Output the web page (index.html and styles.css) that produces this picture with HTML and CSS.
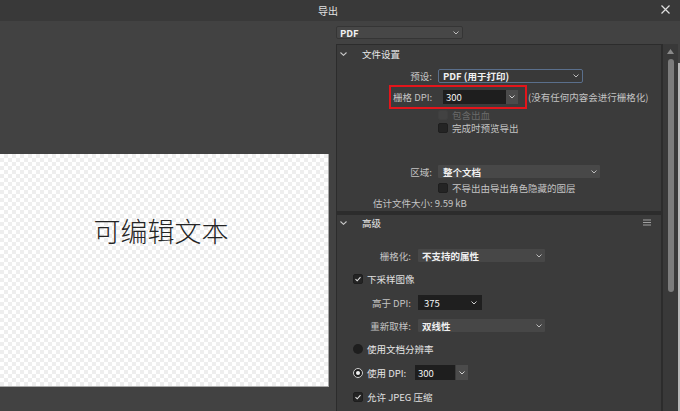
FILE: index.html
```html
<!DOCTYPE html>
<html lang="zh-CN">
<head>
<meta charset="utf-8">
<title>导出</title>
<link rel="stylesheet" href="styles.css">
</head>
<body>
<div class="window">
  <header class="titlebar">
    <div class="title">导出</div>
    <div class="close">
      <svg width="9" height="9" viewBox="0 0 9 9"><path d="M0.5 0.5L8.5 8.5M8.5 0.5L0.5 8.5" stroke="#e0e0e0" stroke-width="1.2" fill="none"/></svg>
    </div>
  </header>
  <div class="main">
    <div class="preview">
      <div class="canvas"><p class="doc-text">可编辑文本</p></div>
    </div>
    <div class="side">
      <div class="side-content">
        <div class="select select-format"><span class="sel-text">PDF</span><svg class="chev" width="6" height="4" viewBox="0 0 6 4"><path d="M0.5 0.5L3 3L5.5 0.5" fill="none" stroke="#bdbdbd" stroke-width="1"/></svg></div>
        <div class="panel">
          <section class="section s1">
            <div class="sec-head">
              <svg class="head-chev" width="7" height="4" viewBox="0 0 7 4"><path d="M0.5 0.5L3.5 3.3L6.5 0.5" fill="none" stroke="#c8c8c8" stroke-width="1.1"/></svg>
              <span class="sec-title">文件设置</span>
            </div>
            <div class="row r-preset">
              <span class="label">预设:</span>
              <div class="select select-preset"><span class="sel-text">PDF (用于打印)</span><svg class="chev" width="6" height="4" viewBox="0 0 6 4"><path d="M0.5 0.5L3 3L5.5 0.5" fill="none" stroke="#bdbdbd" stroke-width="1"/></svg></div>
            </div>
            <div class="row r-dpi">
              <div class="highlight">
                <span class="label-inline">栅格 DPI:</span>
                <div class="spin spin-raster">
                  <span class="spin-value">300</span>
                  <span class="spin-btn"><svg width="6" height="4" viewBox="0 0 6 4"><path d="M0.5 0.5L3 3L5.5 0.5" fill="none" stroke="#d0d0d0" stroke-width="1"/></svg></span>
                </div>
              </div>
              <span class="hint">(没有任何内容会进行栅格化)</span>
            </div>
            <div class="row check-row s1-check disabled r-bleed"><span class="checkbox"></span><span>包含出血</span></div>
            <div class="row check-row s1-check r-preview"><span class="checkbox"></span><span>完成时预览导出</span></div>
            <div class="row r-area">
              <span class="label">区域:</span>
              <div class="select select-area"><span class="sel-text">整个文档</span><svg class="chev" width="6" height="4" viewBox="0 0 6 4"><path d="M0.5 0.5L3 3L5.5 0.5" fill="none" stroke="#bdbdbd" stroke-width="1"/></svg></div>
            </div>
            <div class="row check-row s1-check r-hidden"><span class="checkbox"></span><span>不导出由导出角色隐藏的图层</span></div>
            <div class="row r-size">估计文件大小: 9.59 kB</div>
          </section>
          <section class="section s2">
            <div class="sec-head">
              <svg class="head-chev" width="7" height="4" viewBox="0 0 7 4"><path d="M0.5 0.5L3.5 3.3L6.5 0.5" fill="none" stroke="#c8c8c8" stroke-width="1.1"/></svg>
              <span class="sec-title">高级</span>
              <svg class="menu-icon" width="8" height="7" viewBox="0 0 8 7"><path d="M0 1H8M0 3.5H8M0 6H8" stroke="#a0a0a0" stroke-width="1.2"/></svg>
            </div>
            <div class="row r-rasterize">
              <span class="label label2">栅格化:</span>
              <div class="select select-s2"><span class="sel-text">不支持的属性</span><svg class="chev" width="6" height="4" viewBox="0 0 6 4"><path d="M0.5 0.5L3 3L5.5 0.5" fill="none" stroke="#bdbdbd" stroke-width="1"/></svg></div>
            </div>
            <div class="row check-row s2-check r-down"><span class="checkbox checked"><svg width="8" height="8" viewBox="0 0 8 8"><path d="M1.5 4.2L3.2 5.8L6.5 2.2" fill="none" stroke="#e4e4e4" stroke-width="1.1"/></svg></span><span>下采样图像</span></div>
            <div class="row r-above">
              <span class="label label2">高于 DPI:</span>
              <div class="spin-dark"><span class="spin-value">375</span><svg width="6" height="4" viewBox="0 0 6 4"><path d="M0.5 0.5L3 3L5.5 0.5" fill="none" stroke="#d0d0d0" stroke-width="1"/></svg></div>
            </div>
            <div class="row r-resample">
              <span class="label label2">重新取样:</span>
              <div class="select select-s2"><span class="sel-text">双线性</span><svg class="chev" width="6" height="4" viewBox="0 0 6 4"><path d="M0.5 0.5L3 3L5.5 0.5" fill="none" stroke="#bdbdbd" stroke-width="1"/></svg></div>
            </div>
            <div class="row check-row s2-check r-docres"><span class="radio"></span><span class="val">使用文档分辨率</span></div>
            <div class="row check-row s2-check r-usedpi">
              <span class="radio on"></span><span class="val usedpi-text">使用 DPI:</span>
              <div class="spin spin-use">
                <span class="spin-value">300</span>
                <span class="spin-btn"><svg width="6" height="4" viewBox="0 0 6 4"><path d="M0.5 0.5L3 3L5.5 0.5" fill="none" stroke="#d0d0d0" stroke-width="1"/></svg></span>
              </div>
            </div>
            <div class="row check-row s2-check r-jpeg"><span class="checkbox checked"><svg width="8" height="8" viewBox="0 0 8 8"><path d="M1.5 4.2L3.2 5.8L6.5 2.2" fill="none" stroke="#e4e4e4" stroke-width="1.1"/></svg></span><span>允许 JPEG 压缩</span></div>
          </section>
        </div>
      </div>
      <div class="scrollbar">
        <svg class="scroll-up" width="7" height="5" viewBox="0 0 7 5"><path d="M0 5L3.5 0L7 5Z" fill="#8a8a8a"/></svg>
        <div class="thumb"></div>
      </div>
      <div class="edge"></div>
    </div>
  </div>
</div>
</body>
</html>
```
FILE: styles.css
```css
* { box-sizing: border-box; margin: 0; padding: 0; }
html, body { width: 680px; height: 411px; overflow: hidden; background: #424242; }
body {
  font-family: "Noto Sans CJK SC", "Noto Sans", sans-serif;
  font-size: 9.5px;
  line-height: 12px;
  color: #c4c4c4;
}
.window { width: 680px; height: 411px; display: flex; flex-direction: column; }

.titlebar { height: 21px; flex: none; background: #393939; display: flex; align-items: center; }
.title { flex: 1; text-align: center; color: #e2e2e2; font-size: 10px; line-height: 20px; }
.close { width: 24px; height: 20px; display: flex; align-items: center; justify-content: center; padding-right: 5px; padding-bottom: 3px; }

.main { flex: 1; display: flex; min-height: 0; }

.preview { width: 330px; flex: none; padding-top: 133px; }
.canvas {
  width: 329px; height: 233px;
  border-right: 1px solid #a8a8a8; border-bottom: 1px solid #a8a8a8;
  background: repeating-conic-gradient(#eeeeee 0 25%, #ffffff 0 50%) 0 0 / 8px 8px;
  padding-top: 63px; padding-right: 6px;
}
.doc-text { font-size: 27px; line-height: 27px; text-align: center; color: #242424; font-weight: 300; }

.side { flex: 1; display: flex; min-width: 0; }
.side-content { width: 333px; flex: none; padding: 5px 0 0 6px; display: flex; flex-direction: column; }

.select { display: flex; align-items: center; justify-content: space-between; height: 13px; color: #f0f0f0; }
.sel-text { font-weight: 600; line-height: 12px; white-space: nowrap; }
.select-format { width: 127px; background: #474747; border: 1px solid #353535; border-radius: 2px; padding: 0 3px 0 3px; }
.select-preset { width: 145px; height: 14px; background: #393939; border: 1px solid #5a6f8c; border-radius: 2px; padding: 0 3px 0 4px; }
.select-area { width: 162px; background: #484848; border-radius: 1px; padding: 0 3px 0 5px; }
.select-s2 { width: 127px; background: #474747; border-radius: 1px; padding: 0 3px 0 4px; }

.panel { margin-top: 5px; width: 327px; flex: 1; background: #2c2c2c; padding: 1px 2px 0 1px; display: flex; flex-direction: column; gap: 4px; }
.section { background: #3b3b3b; }
.s1 { padding-bottom: 2px; }
.s2 { flex: 1; }

.sec-head { height: 18px; display: flex; align-items: center; padding-left: 3px; padding-right: 10px; }
.s2 .sec-head { height: 16px; }
.head-chev { flex: none; }
.sec-title { margin-left: 15px; color: #e8e8e8; flex: 1; }
.menu-icon { margin-top: -1px; }

.row { display: flex; align-items: center; white-space: nowrap; }
.label { width: 95px; text-align: right; margin-right: 6px; flex: none; }
.label2 { width: 74px; margin-right: 7px; }

.r-preset { margin-top: 6px; height: 14px; }

.r-dpi { margin-top: 2px; height: 24px; }
.highlight { margin-left: 52px; height: 24px; border: 2px solid #e3151b; padding: 0 7px 0 2px; display: flex; align-items: center; }
.label-inline { width: 39px; flex: none; }
.spin { display: flex; height: 14px; }
.spin-raster { margin-left: 11px; }
.spin-value { display: flex; align-items: center; background: #1e1e1e; color: #f4f4f4; padding-left: 3px; }
.spin-raster .spin-value { width: 63px; }
.spin-btn { width: 12px; background: #4b4b4b; display: flex; align-items: center; justify-content: center; }
.hint { margin-left: 1px; }

.check-row { height: 12px; }
.s1-check { margin-left: 101px; }
.s2-check { margin-left: 16px; }
.checkbox { width: 10px; height: 10px; border-radius: 2px; background: #242424; border: 1px solid #1e1e1e; margin-right: 4px; flex: none; display: flex; align-items: center; justify-content: center; }
.disabled { color: #6a6a6a; }
.disabled .checkbox { background: #424242; border-color: #3f3f3f; }
.r-preview { margin-top: 1px; }
.r-area { margin-top: 31px; height: 13px; }
.r-hidden { margin-top: 4px; }
.r-size { margin-top: 3px; height: 12px; margin-left: 36px; }

.r-rasterize { margin-top: 18px; height: 13px; }
.r-down { margin-top: 11px; }
.r-above { margin-top: 10px; height: 15px; }
.spin-dark { width: 64px; height: 15px; background: #1f1f1f; color: #f4f4f4; display: flex; align-items: center; justify-content: space-between; padding: 0 5px 0 3px; }
.r-resample { margin-top: 9px; height: 13px; }
.r-docres { margin-top: 11px; }
.radio { width: 10px; height: 10px; border-radius: 50%; background: #1e1e1e; margin-right: 4px; flex: none; display: flex; align-items: center; justify-content: center; }
.radio.on { border: 1px solid #cfcfcf; background: #1e1e1e; }
.radio.on::after { content: ""; width: 4px; height: 4px; border-radius: 50%; background: #f0f0f0; }
.val { color: #e6e6e6; }
.r-usedpi { margin-top: 10px; height: 15px; }
.usedpi-text { width: 44px; margin-right: 4px; }
.spin-use { height: 15px; }
.spin-use .spin-value { width: 40px; }
.spin-use .spin-btn { margin-left: 1px; }
.r-jpeg { margin-top: 11px; }
.r-down, .r-jpeg { color: #e0e0e0; }

.scrollbar { width: 15px; flex: none; margin-top: 23px; background: #393939; display: flex; flex-direction: column; align-items: center; }
.scroll-up { margin-top: 5px; }
.thumb { margin-top: 5px; width: 6px; height: 233px; border-radius: 3px; background: #7c7c7c; }
.edge { width: 2px; flex: none; background: linear-gradient(#424242 0 42px, #b8b8b8 42px); }
```
